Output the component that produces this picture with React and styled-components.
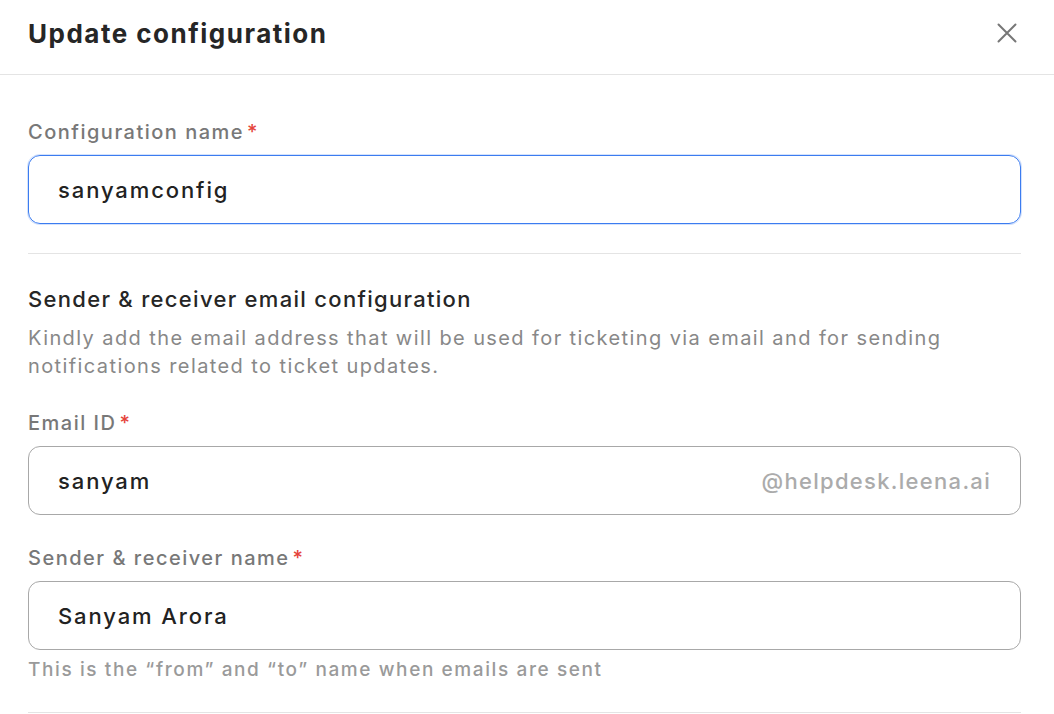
import React, { useState } from 'react';
import styled, { createGlobalStyle } from 'styled-components';

const GlobalStyle = createGlobalStyle`
    body {
        margin: 0;
        background: #ffffff;
        font-family: Inter, "Noto Sans", sans-serif;
    }
`;

const UpdateConfiguration = () => {
    const [values, setValues] = useState({
        name: 'sanyamconfig',
        email: 'sanyam',
        sender: 'Sanyam Arora'
    });

    const handleChange = (e) => {
        setValues({ ...values, [e.target.name]: e.target.value });
    };

    return (<Panel>
        <GlobalStyle />
        <Header>
            <Title>Update configuration</Title>
            <CloseButton aria-label="Close">
                <svg width="22" height="22" viewBox="0 0 22 22" fill="none">
                    <path d="M2.5 2.5L19.5 19.5M19.5 2.5L2.5 19.5" stroke="#777" strokeWidth="2" strokeLinecap="round" />
                </svg>
            </CloseButton>
        </Header>
        <Body>
            <Field>
                <Label>Configuration name<Required>*</Required></Label>
                <InputBox focused>
                    <Input name="name" value={values.name} onChange={handleChange} />
                </InputBox>
            </Field>
            <Divider />
            <Section>
                <SectionTitle>Sender &amp; receiver email configuration</SectionTitle>
                <Description>
                    Kindly add the email address that will be used for ticketing via email and for sending notifications related to ticket updates.
                </Description>
            </Section>
            <Field spaced>
                <Label>Email ID<Required>*</Required></Label>
                <InputBox>
                    <Input name="email" value={values.email} onChange={handleChange} />
                    <Suffix>@helpdesk.leena.ai</Suffix>
                </InputBox>
            </Field>
            <Field spaced>
                <Label>Sender &amp; receiver name<Required>*</Required></Label>
                <InputBox>
                    <Input name="sender" value={values.sender} onChange={handleChange} />
                </InputBox>
                <Helper>This is the “from” and “to” name when emails are sent</Helper>
            </Field>
            <Divider />
        </Body>
    </Panel>);
};

export default UpdateConfiguration;

const Panel = styled.div`
    width: 1054px;
    height: 714px;
    overflow: hidden;
    background: #fff;
`

const Header = styled.div`
    height: 75px;
    box-sizing: border-box;
    display: flex;
    align-items: center;
    justify-content: space-between;
    padding: 0 36px 8px 28px;
    border-bottom: 1px solid #e4e4e4;
`

const Title = styled.h1`
    margin: 0;
    font-size: 26px;
    font-weight: 700;
    color: #262626;
    letter-spacing: 1.5px;
`

const CloseButton = styled.button`
    border: none;
    background: none;
    padding: 0;
    display: flex;
    cursor: pointer;
`

const Body = styled.div`
    padding: 43px 33px 0 28px;
`

const Field = styled.div`
    display: flex;
    flex-direction: column;
    margin-top: ${p => p.spaced ? '29px' : '0'};
`

const Label = styled.label`
    font-size: 20px;
    line-height: 28px;
    font-weight: 500;
    color: #787878;
    letter-spacing: 1.5px;
    margin-bottom: 9px;
`

const Required = styled.span`
    color: #e5443b;
    margin-left: 3px;
`

const InputBox = styled.div`
    height: 69px;
    box-sizing: border-box;
    display: flex;
    align-items: center;
    padding: 0 29px;
    border-radius: 12px;
    border: 1px solid ${p => p.focused ? '#3b7cf0' : '#a8a8a8'};
    box-shadow: ${p => p.focused ? '0 0 0 1px rgba(59,124,240,0.22)' : 'none'};
`

const Input = styled.input`
    flex: 1;
    min-width: 0;
    border: none;
    outline: none;
    padding: 0;
    background: transparent;
    font-family: inherit;
    font-size: 22px;
    font-weight: 500;
    letter-spacing: 1.9px;
    color: #222;
`

const Suffix = styled.span`
    font-size: 22px;
    font-weight: 500;
    letter-spacing: 1.3px;
    color: #ababab;
`

const Divider = styled.hr`
    border: none;
    border-top: 1px solid #e4e4e4;
    margin: 29px 0 0;
`

const Section = styled.div`
    margin-top: 30px;
    display: flex;
    flex-direction: column;
    gap: 10px;
`

const SectionTitle = styled.h2`
    margin: 0;
    font-size: 22px;
    line-height: 30px;
    font-weight: 500;
    letter-spacing: 1.3px;
    color: #262626;
`

const Description = styled.p`
    margin: 0;
    font-size: 20px;
    line-height: 28px;
    letter-spacing: 1.4px;
    color: #888;
`

const Helper = styled.p`
    margin: 7px 0 0;
    font-size: 19px;
    line-height: 26px;
    font-weight: 500;
    letter-spacing: 1.6px;
    color: #9a9a9a;
`
